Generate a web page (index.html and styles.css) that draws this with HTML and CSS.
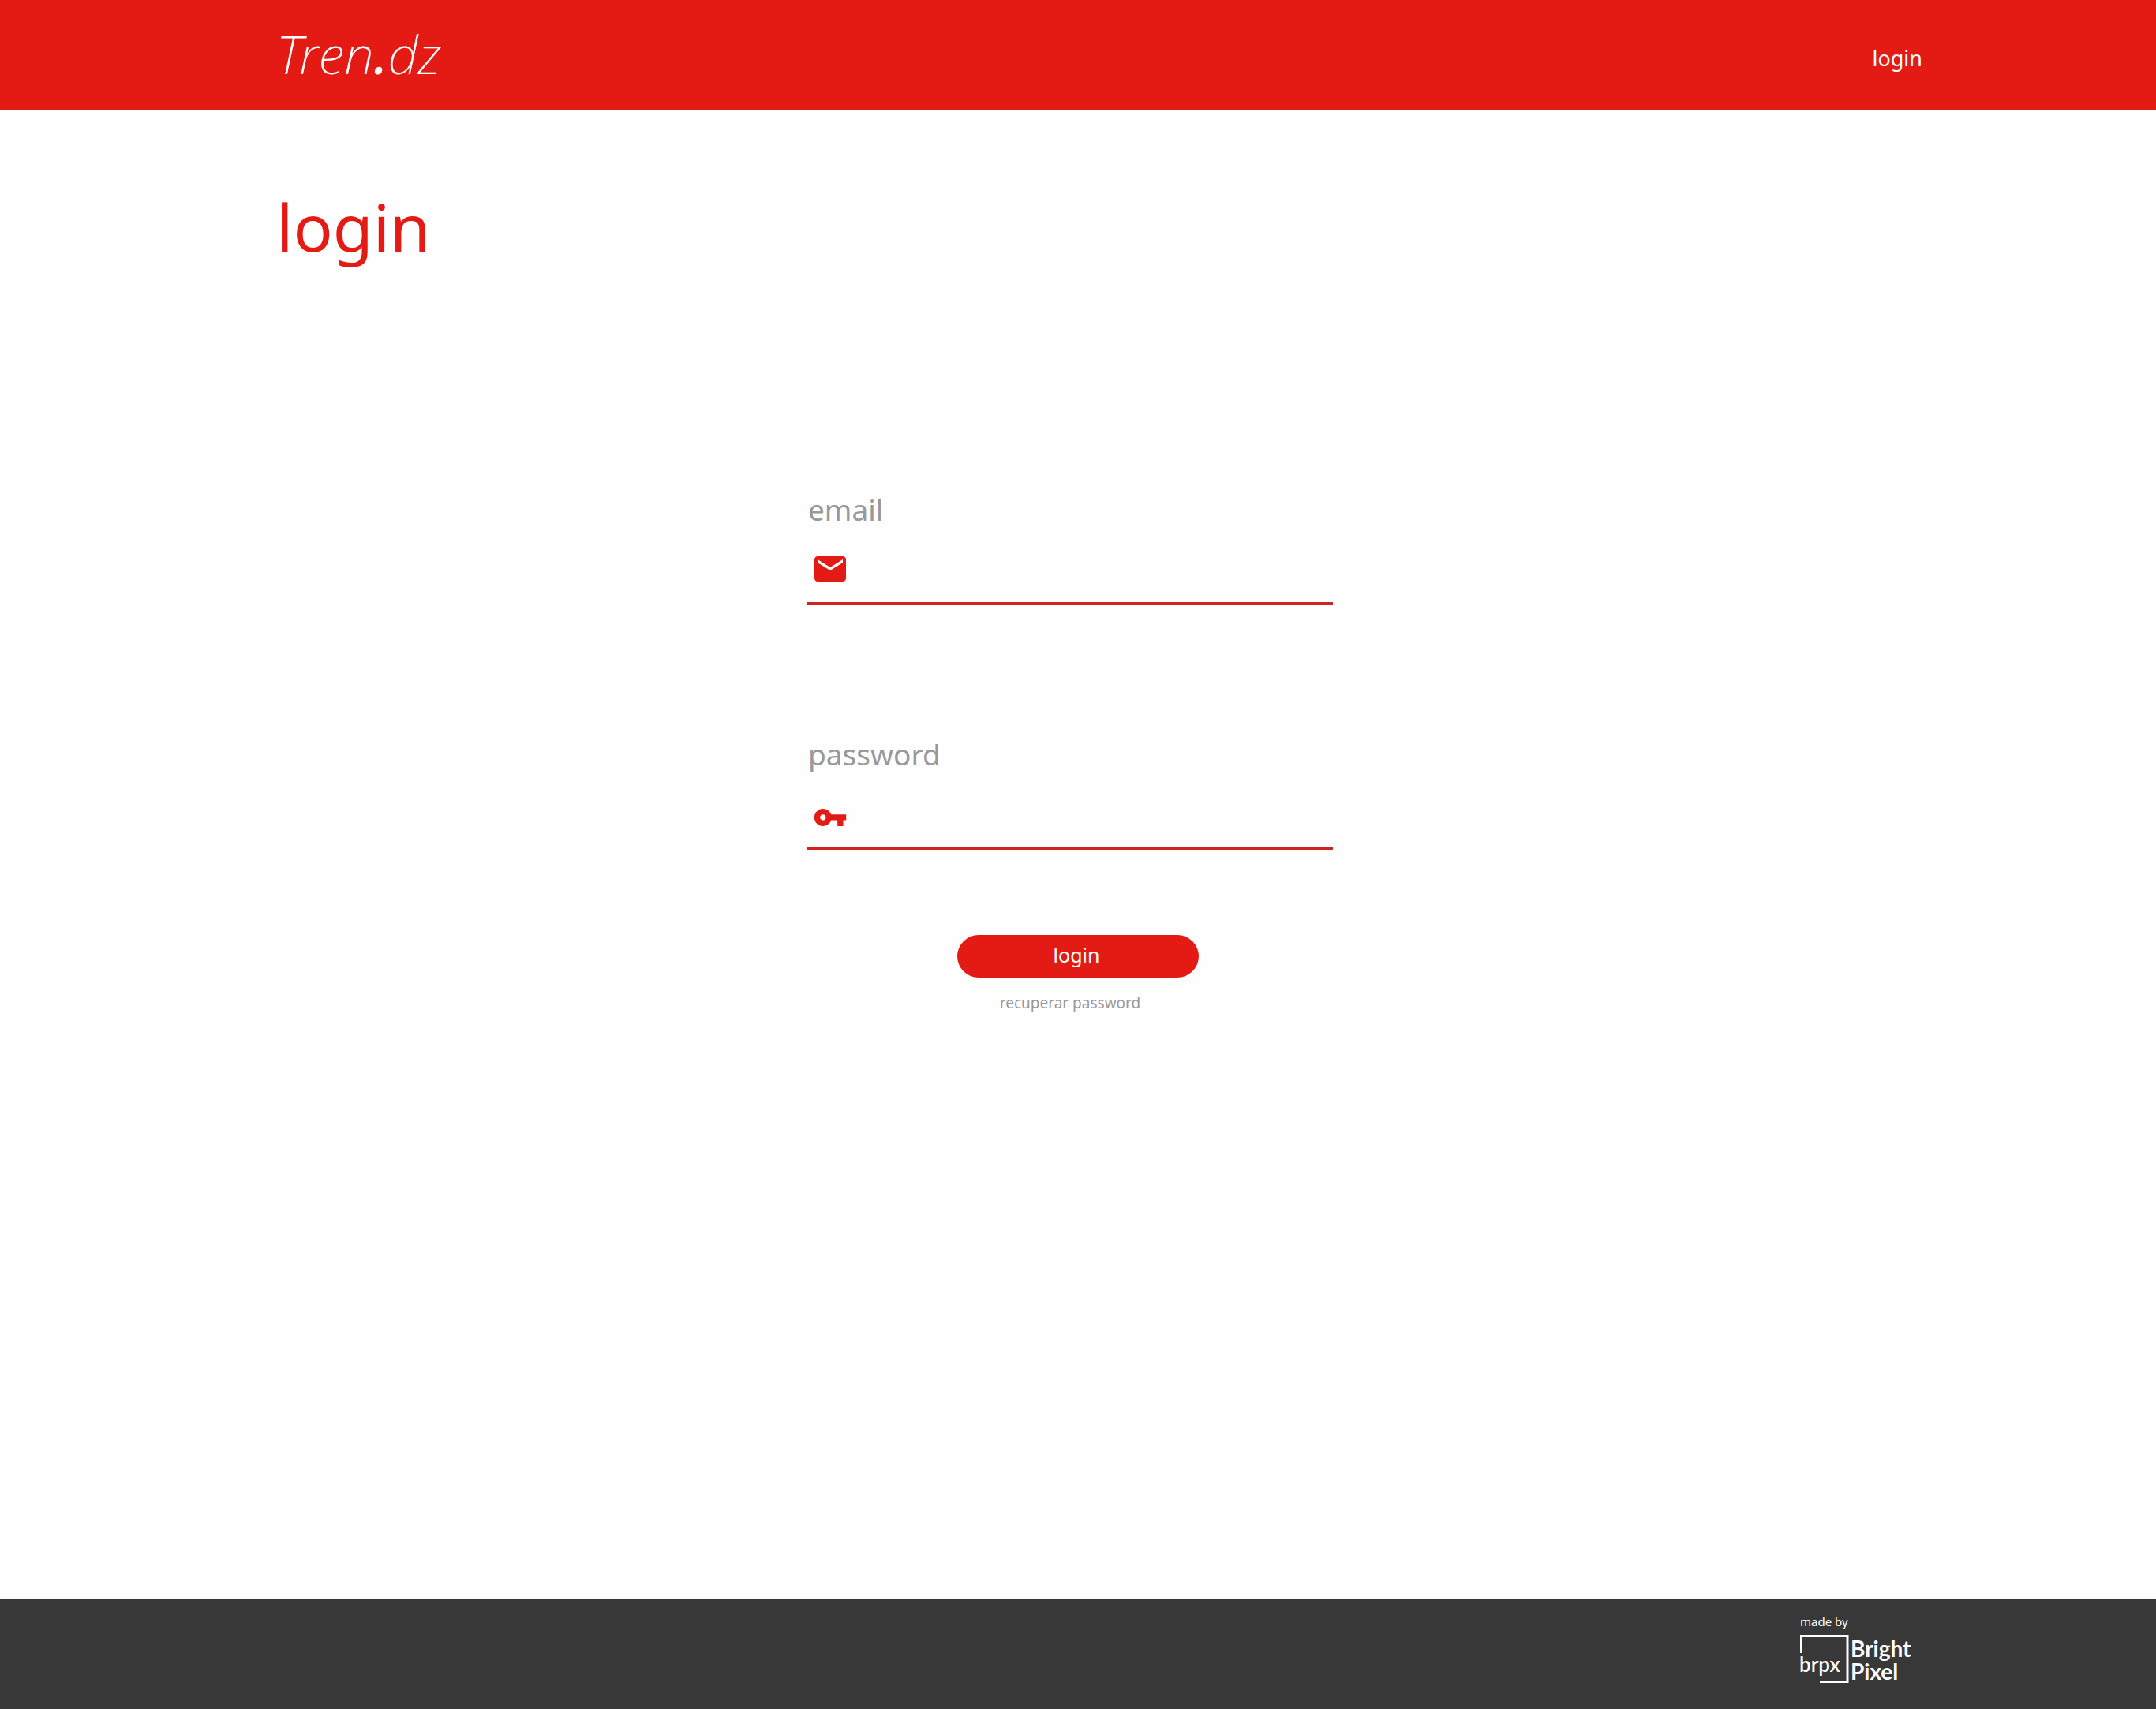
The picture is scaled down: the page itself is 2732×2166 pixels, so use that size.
FILE: index.html
```
<!DOCTYPE html>
<html lang="pt">
<head>
  <meta charset="utf-8">
  <meta name="viewport" content="width=device-width, initial-scale=1">
  <title>Tren.dz</title>
  <link rel="stylesheet" href="styles.css">
</head>
<body>
  <header class="site-header">
    <a class="brand" href="#">Tren<span class="brand-dot">.</span>dz</a>
    <nav><a class="nav-link" href="#">login</a></nav>
  </header>

  <main class="page">
    <h1 class="page-title">login</h1>
    <form class="login-form">
      <div class="field">
        <label class="field-label" for="email">email</label>
        <div class="field-control">
          <svg class="field-icon" viewBox="0 0 24 24" aria-hidden="true"><path d="M20 4H4c-1.1 0-2 .9-2 2v12c0 1.1.9 2 2 2h16c1.1 0 2-.9 2-2V6c0-1.1-.9-2-2-2zm0 4l-8 5-8-5V6l8 5 8-5v2z"/></svg>
          <input class="field-input" id="email" type="email">
        </div>
      </div>
      <div class="field">
        <label class="field-label" for="password">password</label>
        <div class="field-control">
          <svg class="field-icon" viewBox="-1.1 -3.8 26.2 26.2" aria-hidden="true"><path d="M12.65 10C11.83 7.67 9.61 6 7 6c-3.31 0-6 2.69-6 6s2.69 6 6 6c2.61 0 4.83-1.67 5.65-4H17v4h4v-4h2v-4H12.65zM7 14c-1.1 0-2-.9-2-2s.9-2 2-2 2 .9 2 2-.9 2-2 2z"/></svg>
          <input class="field-input" id="password" type="password">
        </div>
      </div>
      <button class="submit" type="submit">login</button>
      <div class="recover"><a class="recover-link" href="#">recuperar password</a></div>
    </form>
  </main>

  <footer class="site-footer">
    <div class="credit">
      <span class="credit-text">made by</span>
      <a class="credit-link" href="#">
        <svg class="credit-logo" viewBox="0 0 144 62">
          <path class="logo-frame" d="M1.5 23V1.5H60V59.5H25"/>
          <text class="logo-mark" x="-1" y="47">brpx</text>
          <text class="logo-name"><tspan x="64" y="28">Bright</tspan> <tspan x="64" y="57">Pixel</tspan></text>
        </svg>
      </a>
    </div>
  </footer>
</body>
</html>
```
FILE: styles.css
```
:root {
  --red: #e41b14;
  --line: #d12421;
  --grey: #999;
  --dark: #383838;
}

* {
  box-sizing: border-box;
}

body {
  margin: 0;
  min-height: 100vh;
  display: flex;
  flex-direction: column;
  background: #fefefe;
  color: var(--grey);
  font-family: "Noto Sans", "Open Sans", sans-serif;
}

a {
  color: inherit;
  text-decoration: none;
}

.site-header {
  display: flex;
  align-items: center;
  justify-content: space-between;
  height: 140px;
  padding: 0 296px 0 350px;
  background: var(--red);
  color: #fff;
}

.brand {
  padding-bottom: 4px;
  font-size: 67px;
  line-height: 96px;
  font-style: italic;
  font-weight: 200;
}

.brand-dot {
  font-weight: 500;
}

.nav-link {
  display: block;
  padding-top: 8px;
  font-size: 27px;
  line-height: 40px;
}

.page {
  flex: 1;
  padding: 91px 350px;
}

.page-title {
  margin: 0 0 279px;
  color: var(--red);
  font-size: 83px;
  line-height: 112px;
  font-weight: 400;
}

.login-form {
  display: flex;
  flex-direction: column;
  max-width: 686px;
  margin: 0 auto;
}

.field {
  margin: 0 20px 165px 0;
}

.field:nth-of-type(2) {
  margin-bottom: 108px;
}

.field-label {
  display: block;
  padding-left: 1px;
  font-size: 37px;
  line-height: 48px;
}

.field-control {
  display: flex;
  gap: 16px;
  padding: 27px 5px 18px;
  border-bottom: 4px solid var(--line);
}

.field-icon {
  flex: none;
  width: 48px;
  height: 48px;
  fill: var(--red);
}

.field-input {
  flex: 1;
  min-width: 0;
  padding: 0;
  border: 0;
  outline: 0;
  background: transparent;
  color: var(--dark);
  font: inherit;
  font-size: 27px;
}

.submit {
  align-self: center;
  width: 306px;
  height: 54px;
  padding: 0 4px 4px 0;
  border: 0;
  border-radius: 27px;
  background: var(--red);
  color: #fff;
  font: inherit;
  font-size: 25px;
  line-height: 40px;
}

.recover {
  margin-top: 19px;
  padding-right: 20px;
  font-size: 19px;
  line-height: 26px;
  text-align: center;
}

.site-footer {
  display: flex;
  justify-content: flex-end;
  height: 140px;
  padding: 19px 307px 0;
  background: var(--dark);
  color: #fff;
}

.credit-text {
  display: block;
  font-size: 15px;
  line-height: 20px;
}

.credit-link {
  display: block;
  margin-top: 7px;
}

.credit-logo {
  display: block;
  width: 144px;
  height: 62px;
  overflow: visible;
  fill: #fff;
  font-family: Lato, sans-serif;
}

.logo-frame {
  fill: none;
  stroke: #fff;
  stroke-width: 3;
}

.logo-mark {
  font-size: 26px;
  font-weight: 600;
}

.logo-name {
  font-size: 28px;
  font-weight: 700;
}
```
